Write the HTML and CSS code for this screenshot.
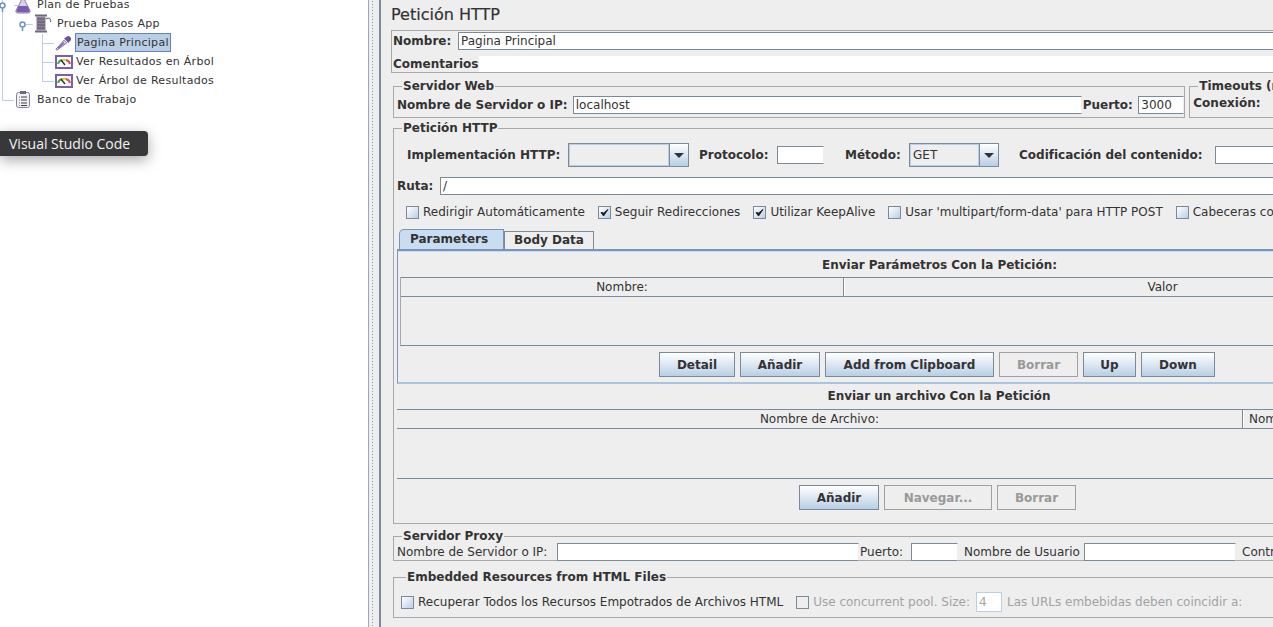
FILE: index.html
```html
<!DOCTYPE html>
<html lang="es">
<head>
  <meta charset="UTF-8">
  <title>Petición HTTP</title>
  <link rel="stylesheet" href="styles.css">
</head>
<body>
  <div class="app">
    <div class="tree-pane">
      <svg class="tree-lines" width="120" height="110">
        <path d="M2.5 0V100.5H14M22.5 24.5H33M22.5 5.5H14M42.5 34V81.5H54M42.5 43.5H54M42.5 62.5H54" fill="none" stroke="#b8cfe5"/>
        <circle cx="2.5" cy="5.5" r="2.5" fill="#fff" stroke="#6b93c4" stroke-width="1.5"/>
        <path d="M2.5 8V12" stroke="#6b93c4" stroke-width="1.5"/>
        <circle cx="22.5" cy="24.5" r="2.5" fill="#fff" stroke="#6b93c4" stroke-width="1.5"/>
        <path d="M22.5 27V31" stroke="#6b93c4" stroke-width="1.5"/>
      </svg>
      <ul class="tree">
        <li class="tree-row lvl0">
          <svg class="ico" width="18" height="19" viewBox="0 0 18 19"><path d="M7 1h4v5l5 9.500c.6 1.500-.4 2.500-1.500 2.500h-11c-1.100 0-2.100-1-1.500-2.500l5-9.500z" fill="#d9d4e2" stroke="#8d8299"/><path d="M4.500 11h9l2 4.500c.3 1-.3 1.800-1 1.800h-11c-.7 0-1.300-.8-1-1.800z" fill="#7b59b8"/></svg>
          <span>Plan de Pruebas</span>
        </li>
        <li class="tree-row lvl1">
          <svg class="ico" width="18" height="19" viewBox="0 0 18 19"><path d="M1 1.500h12M1 17.500h12" stroke="#6f6780" stroke-width="2"/><rect x="2.500" y="2.500" width="9" height="14" fill="#8b8396"/><path d="M3 5h8M3 8h8M3 11h8M3 14h8" stroke="#5d5669"/><path d="M12 5c3-2 5.500 0 4.500 3" fill="none" stroke="#77708a" stroke-width="1.200"/></svg>
          <span>Prueba Pasos App</span>
        </li>
        <li class="tree-row lvl2">
          <svg class="ico" width="20" height="19" viewBox="0 0 20 19"><path d="M2 18l-1-1 9-10 3 3z" fill="#e8e4f0" stroke="#6d5a9a"/><path d="M3 15l6-6 2 1-7 7z" fill="#8b72c4"/><path d="M10 5l5 5 1.500-2 1-1c2-2.500-2.500-6.500-4.500-4l-1 1z" fill="#6b4fa8"/></svg>
          <span class="selected">Pagina Principal</span>
        </li>
        <li class="tree-row lvl2">
          <svg class="ico" width="18" height="14" viewBox="0 0 18 14"><rect x="1" y="1" width="16" height="12" fill="#fff" stroke="#7b5fa8" stroke-width="2"/><path d="M3 9a6 5 0 0 1 4-4" stroke="#4fa354" stroke-width="2" fill="none"/><path d="M7 5a6 5 0 0 1 4 0" stroke="#e3c44a" stroke-width="2" fill="none"/><path d="M11 5a6 5 0 0 1 4 4" stroke="#d9534a" stroke-width="2" fill="none"/><path d="M6 5l4 5" stroke="#333" stroke-width="1.500"/></svg>
          <span>Ver Resultados en Árbol</span>
        </li>
        <li class="tree-row lvl2">
          <svg class="ico" width="18" height="14" viewBox="0 0 18 14"><rect x="1" y="1" width="16" height="12" fill="#fff" stroke="#7b5fa8" stroke-width="2"/><path d="M3 9a6 5 0 0 1 4-4" stroke="#4fa354" stroke-width="2" fill="none"/><path d="M7 5a6 5 0 0 1 4 0" stroke="#e3c44a" stroke-width="2" fill="none"/><path d="M11 5a6 5 0 0 1 4 4" stroke="#d9534a" stroke-width="2" fill="none"/><path d="M6 5l4 5" stroke="#333" stroke-width="1.500"/></svg>
          <span>Ver Árbol de Resultados</span>
        </li>
        <li class="tree-row lvl0">
          <svg class="ico" width="18" height="19" viewBox="0 0 18 19"><rect x="2.500" y="2.500" width="13" height="15" rx="2" fill="#f1eef4" stroke="#8a8094"/><rect x="6" y="1" width="6" height="3" fill="#6f6780"/><path d="M5 7h1M5 10h1M5 13h1M5 15.500h1" stroke="#4fa354"/><path d="M7 7h6M7 10h6M7 13h6M7 15.500h6" stroke="#444"/></svg>
          <span>Banco de Trabajo</span>
        </li>
      </ul>
      <div class="tooltip">Visual Studio Code</div>
    </div>

    <div class="splitter"><div class="grip"></div></div>

    <div class="main">
      <div class="content">
        <h1 class="title">Petición HTTP</h1>

        <div class="name-box">
          <div class="row name-row">
            <span class="b lbl-name">Nombre:</span>
            <div class="field grow">Pagina Principal</div>
          </div>
          <div class="row comment-row">
            <span class="b">Comentarios</span>
            <div class="comment-fill"></div>
          </div>
        </div>

        <div class="row server-row">
          <fieldset class="group web-group">
            <legend>Servidor Web</legend>
            <div class="row">
              <span class="b host-label">Nombre de Servidor o IP:</span>
              <div class="field host-field">localhost</div>
              <span class="b port-label">Puerto:</span>
              <div class="field port-field">3000</div>
            </div>
          </fieldset>
          <fieldset class="group timeout-group">
            <legend>Timeouts (milisegundos)</legend>
            <div class="row"><span class="b">Conexión:</span></div>
          </fieldset>
        </div>

        <fieldset class="group http-group">
          <legend>Petición HTTP</legend>

          <div class="row impl-row">
            <span class="b impl-label">Implementación HTTP:</span>
            <div class="combo impl-combo"><div class="combo-value"></div><div class="combo-btn"><i></i></div></div>
            <span class="b proto-label">Protocolo:</span>
            <div class="field proto-field"></div>
            <span class="b method-label">Método:</span>
            <div class="combo method-combo"><div class="combo-value b">GET</div><div class="combo-btn"><i></i></div></div>
            <span class="b enc-label">Codificación del contenido:</span>
            <div class="field enc-field"></div>
          </div>

          <div class="row path-row">
            <span class="b path-label">Ruta:</span>
            <div class="field grow">/</div>
          </div>

          <div class="row checks">
            <label class="check c1"><span class="box"></span>Redirigir Automáticamente</label>
            <label class="check c2"><span class="box"><svg width="11" height="11" viewBox="0 0 11 11"><path d="M2 5.500l2.500 3.500L9 2.500 4.700 6z" fill="#222" stroke="#222"/></svg></span>Seguir Redirecciones</label>
            <label class="check c3"><span class="box"><svg width="11" height="11" viewBox="0 0 11 11"><path d="M2 5.500l2.500 3.500L9 2.500 4.700 6z" fill="#222" stroke="#222"/></svg></span>Utilizar KeepAlive</label>
            <label class="check c4"><span class="box"></span>Usar 'multipart/form-data' para HTTP POST</label>
            <label class="check"><span class="box"></span>Cabeceras compatibles con navegador</label>
          </div>

          <div class="tabs">
            <div class="tab active">Parameters</div>
            <div class="tab">Body Data</div>
          </div>
          <div class="tab-panel">
            <div class="table-title b">Enviar Parámetros Con la Petición:</div>
            <div class="table params">
              <div class="thead"><div class="th th-name">Nombre:</div><div class="th grow">Valor</div></div>
              <div class="tbody params-body"></div>
            </div>
            <div class="buttons params-buttons">
              <button class="btn w-detail">Detail</button>
              <button class="btn w-add">Añadir</button>
              <button class="btn w-clip">Add from Clipboard</button>
              <button class="btn off w-del">Borrar</button>
              <button class="btn w-up">Up</button>
              <button class="btn w-down">Down</button>
            </div>
          </div>

          <div class="table-title b file-title">Enviar un archivo Con la Petición</div>
          <div class="table files">
            <div class="thead file-head"><div class="th th-file">Nombre de Archivo:</div><div class="th grow th-left">Nombre de Parámetro:</div></div>
            <div class="tbody files-body"></div>
          </div>
          <div class="buttons file-buttons">
            <button class="btn w-add">Añadir</button>
            <button class="btn off w-browse">Navegar...</button>
            <button class="btn off w-del">Borrar</button>
          </div>
        </fieldset>

        <fieldset class="group proxy-group">
          <legend>Servidor Proxy</legend>
          <div class="row">
            <span class="proxy-host">Nombre de Servidor o IP:</span>
            <div class="field proxy-field"></div>
            <span class="proxy-port">Puerto:</span>
            <div class="field proxy-port-field"></div>
            <span class="proxy-user">Nombre de Usuario</span>
            <div class="field proxy-user-field"></div>
            <span class="proxy-pass">Contraseña</span>
          </div>
        </fieldset>

        <fieldset class="group embed-group">
          <legend>Embedded Resources from HTML Files</legend>
          <div class="row embed-row">
            <label class="check e1"><span class="box"></span>Recuperar Todos los Recursos Empotrados de Archivos HTML</label>
            <label class="check off e2"><span class="box"></span>Use concurrent pool. Size:</label>
            <div class="pool">4</div>
            <span class="muted">Las URLs embebidas deben coincidir a:</span>
          </div>
        </fieldset>
      </div>
    </div>
  </div>
</body>
</html>
```

FILE: styles.css
```css
* {
  box-sizing: border-box;
}
html, body {
  margin: 0;
  height: 100%;
  overflow: hidden;
}
body {
  font-family: "DejaVu Sans", sans-serif;
  font-size: 12px;
  color: #333;
  background-color: #eeeeee;
}
.app {
  display: flex;
  width: 1273px;
  height: 627px;
  overflow: hidden;
}

/* left tree */
.tree-pane {
  position: relative;
  width: 368px;
  flex: none;
  background-color: #fff;
  overflow: hidden;
}
.tree-lines {
  position: absolute;
  left: 0;
  top: 0;
}
.tree {
  position: relative;
  list-style: none;
  margin: -5px 0 0;
  padding: 0;
}
.tree-row {
  display: flex;
  align-items: center;
  height: 19px;
  font-size: 11px;
  letter-spacing: 0.3px;
  color: #333;
}
.lvl0 { padding-left: 14px; }
.lvl1 { padding-left: 34px; }
.lvl2 { padding-left: 55px; }
.ico {
  flex: none;
  margin-right: 4px;
}
.lvl2 .ico { margin-right: 3px; width: 18px; }
.lvl0 .ico, .lvl1 .ico { margin-right: 5px; }
.selected {
  background-color: #b8cfe5;
  border: 1px solid #6382bf;
  padding: 1px 1px;
  margin-left: -1px;
  line-height: 15px;
}
.tooltip {
  position: absolute;
  left: 0;
  top: 131px;
  width: 148px;
  height: 25px;
  line-height: 25px;
  padding-left: 9px;
  background-color: #38383a;
  color: #f2f2f2;
  border-radius: 0 4px 4px 0;
  font-family: "Open Sans", sans-serif;
  font-size: 14px;
  box-shadow: 0 4px 14px rgba(0, 0, 0, 0.35);
}

/* split pane divider */
.splitter {
  width: 13px;
  flex: none;
  background-color: #eeeeee;
  border-left: 1px solid #9aa7b5;
  border-right: 2px solid #7a8a99;
  padding: 0 2px 0 1px;
}
.grip {
  height: 100%;
  margin-left: 1px;
  width: 4px;
  background-image: radial-gradient(#8a9aa8 0.6px, transparent 0.8px);
  background-size: 3px 3px;
}

/* right panel */
.main {
  flex: 1;
  min-width: 0;
  overflow: hidden;
}
.content {
  width: 1100px;
  padding: 0 0 0 10px;
}
.title {
  margin: 0;
  height: 30px;
  line-height: 30px;
  font-size: 16px;
  font-weight: normal;
  color: #333;
  -webkit-text-stroke: 0.2px #333;
}
.row {
  display: flex;
  align-items: center;
}
.b {
  font-weight: bold;
}
.grow {
  flex: 1;
}
.field {
  height: 18px;
  line-height: 16px;
  padding-left: 2px;
  background-color: #fff;
  border: 1px solid #7a8a99;
  border-right-color: #eee;
  border-bottom-width: 1px;
  font-size: 12px;
  color: #333;
  white-space: nowrap;
}

.name-box {
  height: 43px;
  border: 1px solid #a8a8a8;
  border-right: 0;
  padding: 1px 0 0 1px;
}
.name-row {
  height: 18px;
}
.lbl-name {
  width: 65px;
}
.comment-row {
  height: 17px;
  margin-top: 5px;
}
.comment-fill {
  flex: 1;
  height: 16px;
  background-color: #fff;
}

.group {
  margin: 0;
  padding: 0;
  border: 1px solid #a8a8a8;
  border-right: 0;
  min-width: 0;
}
.group legend {
  margin-left: 5px;
  padding: 0 1px;
  font-weight: bold;
  font-size: 12px;
  line-height: 14px;
  color: #333;
  white-space: nowrap;
}
.server-row {
  align-items: flex-start;
  margin: 6px 0 0 2px;
}
.web-group {
  width: 815px;
  height: 39px;
  border-right: 1px solid #a8a8a8;
  padding: 3px 0 0 3px;
}
.host-label {
  width: 180px;
}
.host-field {
  width: 521px;
}
.port-label {
  width: 58px;
  padding-left: 1px;
}
.port-field {
  width: 47px;
}
.timeout-group {
  width: 300px;
  height: 39px;
  margin-left: 4px;
  padding: 3px 0 0 3px;
}

.http-group {
  margin: 3px 0 0 2px;
  height: 403px;
  padding: 0 0 0 3px;
}
.impl-row {
  height: 24px;
  margin-top: 8px;
  padding-left: 10px;
}
.impl-label { width: 161px; }
.combo {
  display: flex;
  height: 24px;
  border: 1px solid #7a8a99;
  background-color: #eeeeee;
}
.impl-combo { width: 121px; }
.method-combo { width: 90px; }
.combo-value {
  flex: 1;
  padding-left: 2px;
  line-height: 21px;
  font-weight: normal;
  border: 1px solid #b8cfe5;
}
.combo-btn {
  display: flex;
  align-items: center;
  justify-content: center;
  width: 19px;
  flex: none;
  border-left: 1px solid #7a8a99;
  background: linear-gradient(#fff, #b8cfe5);
}
.combo-btn i {
  width: 0;
  height: 0;
  border-style: solid;
  border-width: 5px 5px 0;
  border-color: #333 transparent transparent;
}
.proto-label { width: 78px; margin-left: 10px; }
.proto-field { width: 47px; }
.method-label { width: 64px; margin-left: 21px; }
.enc-label { width: 196px; margin-left: 20px; }
.enc-field { width: 200px; }

.path-row {
  height: 18px;
  margin-top: 10px;
}
.path-label { width: 43px; }

.checks {
  height: 18px;
  margin-top: 8px;
  padding-left: 9px;
  white-space: nowrap;
}
.check {
  display: flex;
  align-items: center;
  font-size: 12px;
  white-space: nowrap;
  flex: none;
}
.box {
  display: flex;
  align-items: center;
  justify-content: center;
  width: 13px;
  height: 13px;
  margin-right: 4px;
  border: 1px solid #7a8a99;
  background: linear-gradient(135deg, #fff, #b8cfe5);
}
.c1 { margin-right: 13px; }
.c2 { margin-right: 13px; }
.c3 { margin-right: 13px; }
.c4 { margin-right: 13px; }

.tabs {
  display: flex;
  align-items: flex-end;
  height: 20px;
  margin: 8px 0 0 2px;
}
.tab {
  height: 18px;
  line-height: 17px;
  padding: 0 9px;
  font-weight: bold;
  border: 1px solid #7a8a99;
  border-bottom: 0;
  background-color: #eeeeee;
}
.tab.active {
  height: 20px;
  line-height: 19px;
  width: 105px;
  padding-left: 10px;
  background-color: #c8ddf2;
  border-radius: 5px 0 0 0;
  border-color: #7a94b8;
}
.tab-panel {
  height: 135px;
  border: 1px solid #7a94b8;
  border-top: 2px solid #7a94b8;
  border-bottom: 2px solid #a8c4e0;
  border-right: 0;
  box-shadow: inset 0 1px 0 #c8ddf2;
}
.table-title {
  text-align: center;
  line-height: 14px;
  padding-top: 7px;
  height: 26px;
}
.table {
  border-bottom: 1px solid #7a8a99;
}
.params {
  margin-left: 2px;
  border-left: 1px solid #a8a8a8;
}
.thead {
  display: flex;
  height: 20px;
  border-top: 1px solid #7a8a99;
  border-bottom: 1px solid #7a8a99;
  background-color: #eeeeee;
}
.th {
  line-height: 18px;
  text-align: center;
  font-size: 12px;
}
.th-name {
  width: 443px;
  border-right: 1px solid #7a8a99;
  box-shadow: 1px 0 0 #fff;
}
.params-body { height: 48px; }
.files-body { height: 49px; }
.buttons {
  display: flex;
  gap: 5px;
}
.params-buttons {
  margin: 6px 0 0 261px;
}
.btn {
  height: 25px;
  padding: 0;
  font-family: "DejaVu Sans", sans-serif;
  font-size: 12px;
  font-weight: bold;
  color: #333;
  border: 1px solid #7a8a99;
  background: linear-gradient(#fff, #b8cfe5);
}
.btn.off {
  color: #999;
  background: #eeeeee;
  border-color: #a0a0a0;
}
.w-detail { width: 76px; }
.w-add { width: 80px; }
.w-clip { width: 169px; }
.w-del { width: 79px; }
.w-up { width: 53px; }
.w-down { width: 74px; }
.w-browse { width: 108px; }

.file-title {
  height: 25px;
  padding-top: 5px;
}
.th-file {
  width: 846px;
  border-right: 1px solid #7a8a99;
  box-shadow: 1px 0 0 #fff;
}
.th-left {
  text-align: left;
  padding-left: 6px;
}
.file-buttons {
  margin: 6px 0 0 402px;
}

.proxy-group {
  height: 32px;
  margin: 5px 0 0 2px;
  padding: 0 0 0 3px;
}
.proxy-host { width: 160px; }
.proxy-field { width: 302px; }
.proxy-port { width: 52px; padding-left: 1px; }
.proxy-port-field { width: 47px; }
.proxy-user { width: 126px; padding-left: 6px; }
.proxy-user-field { width: 152px; }
.proxy-pass { margin-left: 6px; white-space: nowrap; }

.embed-group {
  height: 48px;
  margin: 9px 0 0 2px;
  padding: 0 0 0 7px;
}
.embed-row {
  height: 20px;
  margin-top: 8px;
}
.e1 { margin-right: 13px; }
.check.off { color: #a3a3a3; }
.check.off .box { background: none; }
.e2 { margin-right: 6px; }
.pool {
  width: 26px;
  height: 20px;
  line-height: 18px;
  padding-left: 2px;
  margin-right: 5px;
  color: #a3a3a3;
  background-color: #fff;
  border: 1px solid #b8cfe5;
}
.muted {
  color: #a3a3a3;
  white-space: nowrap;
}
```
